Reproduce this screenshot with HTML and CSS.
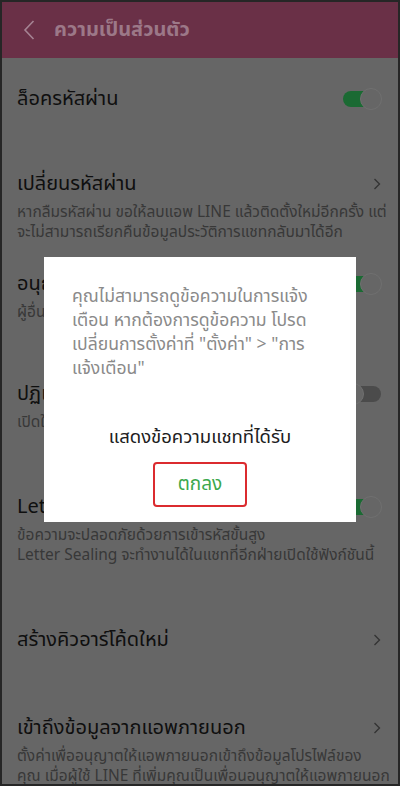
FILE: index.html
```html
<!DOCTYPE html>
<html lang="th">
  <head>
    <meta charset="UTF-8">
    <meta name="viewport" content="width=device-width, initial-scale=1.0">
    <title>ความเป็นส่วนตัว</title>
    <link rel="stylesheet" href="styles.css">
  </head>
  <body>
    <div class="screen">
      <header class="topbar">
        <svg class="back" width="12" height="20" viewBox="0 0 12 20">
          <path d="M10.5 1L2 10l8.5 9" fill="none" stroke="#a58393" stroke-width="1.6"/>
        </svg>
        <h1>ความเป็นส่วนตัว</h1>
      </header>

      <main class="list">
        <div class="item">
          <div class="item-head">
            <span class="item-title">ล็อครหัสผ่าน</span>
            <span class="switch on"></span>
          </div>
        </div>

        <div class="item item-flush">
          <div class="item-head">
            <span class="item-title">เปลี่ยนรหัสผ่าน</span>
            <svg class="chevron" width="8" height="12" viewBox="0 0 8 12"><path d="M1.5 1l5 5-5 5" fill="none" stroke="#333" stroke-width="1.3"/></svg>
          </div>
          <p class="item-desc">หากลืมรหัสผ่าน ขอให้ลบแอพ LINE แล้วติดตั้งใหม่อีกครั้ง แต่<br>จะไม่สามารถเรียกคืนข้อมูลประวัติการแชทกลับมาได้อีก</p>
        </div>

        <div class="item">
          <div class="item-head">
            <span class="item-title">อนุญาตให้เพิ่มเพื่อนด้วยไอดี</span>
            <span class="switch on"></span>
          </div>
          <p class="item-desc">ผู้อื่นสามารถเพิ่มคุณเป็นเพื่อนด้วยไอดี</p>
        </div>

        <div class="item">
          <div class="item-head">
            <span class="item-title">ปฏิเสธข้อความ</span>
            <span class="switch"></span>
          </div>
          <p class="item-desc">เปิดใช้เพื่อปฏิเสธข้อความจากผู้ที่ไม่ใช่เพื่อน</p>
        </div>

        <div class="group-lower">
          <div class="item">
            <div class="item-head">
              <span class="item-title">Letter Sealing</span>
              <span class="switch on"></span>
            </div>
            <p class="item-desc">ข้อความจะปลอดภัยด้วยการเข้ารหัสขั้นสูง<br>Letter Sealing จะทำงานได้ในแชทที่อีกฝ่ายเปิดใช้ฟังก์ชันนี้</p>
          </div>

          <div class="item">
            <div class="item-head">
              <span class="item-title">สร้างคิวอาร์โค้ดใหม่</span>
              <svg class="chevron" width="8" height="12" viewBox="0 0 8 12"><path d="M1.5 1l5 5-5 5" fill="none" stroke="#333" stroke-width="1.3"/></svg>
            </div>
          </div>

          <div class="item">
            <div class="item-head">
              <span class="item-title">เข้าถึงข้อมูลจากแอพภายนอก</span>
              <svg class="chevron" width="8" height="12" viewBox="0 0 8 12"><path d="M1.5 1l5 5-5 5" fill="none" stroke="#333" stroke-width="1.3"/></svg>
            </div>
            <p class="item-desc">ตั้งค่าเพื่ออนุญาตให้แอพภายนอกเข้าถึงข้อมูลโปรไฟล์ของ<br>คุณ เมื่อผู้ใช้ LINE ที่เพิ่มคุณเป็นเพื่อนอนุญาตให้แอพภายนอก</p>
          </div>
        </div>
      </main>
    </div>

    <div class="scrim">
      <div class="dialog">
        <p class="dialog-msg">คุณไม่สามารถดูข้อความในการแจ้ง<br>เตือน หากต้องการดูข้อความ โปรด<br>เปลี่ยนการตั้งค่าที่ "ตั้งค่า" &gt; "การ<br>แจ้งเตือน"</p>
        <div class="dialog-option">แสดงข้อความแชทที่ได้รับ</div>
        <button type="button" class="dialog-btn">ตกลง</button>
      </div>
    </div>
  </body>
</html>
```

FILE: styles.css
```css
body {
  margin: 0;
  font-family: "Noto Sans Thai", "Noto Sans", "DejaVu Sans", sans-serif;
  background-color: #222;
}

.screen {
  height: 786px;
  box-sizing: border-box;
  border: 2px solid #262626;
  background-color: #666;
  overflow: hidden;
}

/* header */
.topbar {
  display: flex;
  align-items: center;
  height: 56px;
  padding-left: 21px;
  background-color: #6a3047;
}

.back {
  flex: none;
  margin-right: 19px;
}

.topbar h1 {
  margin: 0;
  font-size: 20px;
  font-weight: bold;
  color: #9c7888;
}

/* list rows */
.item {
  padding: 27px 16px 30px 15px;
}

.item-flush {
  padding-bottom: 0;
}

.group-lower .item {
  padding-top: 30px;
  padding-bottom: 30px;
}

.item-head {
  display: flex;
  align-items: center;
  justify-content: space-between;
  height: 28px;
}

.item-title {
  font-size: 20px;
  color: #0f0f0f;
  white-space: nowrap;
}

.item-desc {
  margin: 5px 0 0;
  font-size: 15.5px;
  line-height: 20px;
  color: #383838;
  white-space: nowrap;
}

.chevron {
  flex: none;
  margin-right: 1px;
}

/* toggles */
.switch {
  position: relative;
  flex: none;
  width: 40px;
  height: 22px;
}

.switch::before {
  content: "";
  position: absolute;
  left: 1px;
  top: 3px;
  width: 38px;
  height: 16px;
  border-radius: 8px;
  background-color: #4b4b4b;
}

.switch::after {
  content: "";
  position: absolute;
  left: 0;
  top: 0;
  width: 20px;
  height: 20px;
  border-radius: 50%;
  background-color: #666;
  border: 1px solid #707070;
}

.switch.on::before {
  background-color: #1b6a33;
}

.switch.on::after {
  left: auto;
  right: 0;
}

/* dialog */
.scrim {
  position: fixed;
  inset: 0;
  display: flex;
  align-items: center;
  justify-content: center;
  padding-bottom: 7px;
}

.dialog {
  width: 312px;
  height: 265px;
  box-sizing: border-box;
  padding: 28px 28px 0;
  background-color: #fff;
  display: flex;
  flex-direction: column;
  align-items: center;
}

.dialog-msg {
  align-self: stretch;
  margin: 0;
  font-size: 17.6px;
  line-height: 24px;
  color: #8a8a8a;
  white-space: nowrap;
}

.dialog-option {
  margin-top: 42px;
  font-size: 18.5px;
  line-height: 28px;
  color: #202020;
}

.dialog-btn {
  margin-top: 11px;
  width: 94px;
  height: 45px;
  border: 2.5px solid #db2b2f;
  border-radius: 4px;
  background-color: #fff;
  font-family: inherit;
  font-size: 19px;
  color: #3ba84c;
}
```
